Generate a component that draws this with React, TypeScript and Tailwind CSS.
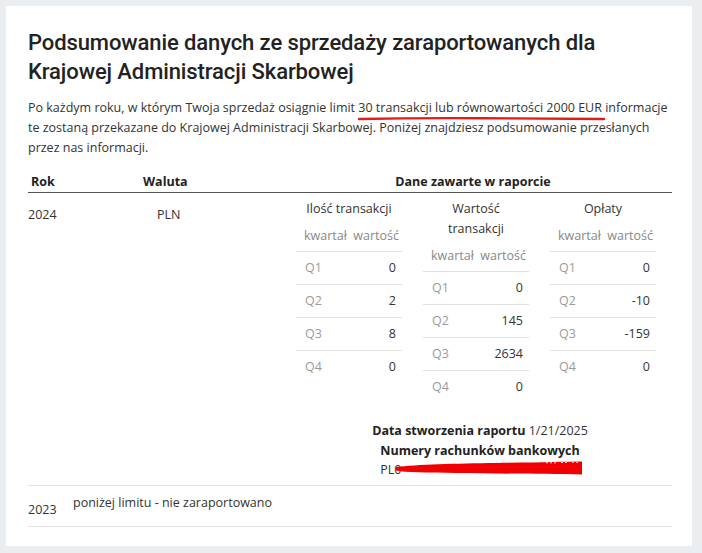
import React from "react";

type Row = [string, string];

function SubTable({ title, rows }: { title: React.ReactNode; rows: Row[] }) {
  return (
    <div className="w-[106px]">
      <div className="text-center leading-[20px] text-[#333]">{title}</div>
      <div className="flex justify-between pl-[8px] pr-[3px] pt-[7px] pb-[5px] leading-[20px] text-[#888]">
        <span>kwartał</span>
        <span>wartość</span>
      </div>
      {rows.map(([q, v]) => (
        <div
          key={q}
          className="flex justify-between border-t border-[#e2e2e2] pl-[9px] pr-[6px] py-[6px] leading-[20px]"
        >
          <span className="text-[#9a9a9a]">{q}</span>
          <span className="text-[#333]">{v}</span>
        </div>
      ))}
    </div>
  );
}

export default function App() {
  return (
    <div
      className="w-[702px] h-[553px] bg-[#ebeef1] pt-[6px] pl-[6px]"
      style={{ fontFamily: '"Open Sans", "Liberation Sans", sans-serif' }}
    >
      <div className="w-[686px] bg-white pt-[22px] pl-[22px] pr-[20px] pb-[19px] text-[12.5px] text-[#333]">
        <h1
          className="text-[22px] leading-[29px] font-medium text-[#222] tracking-[-0.1px]"
          style={{ fontFamily: 'Roboto, "Liberation Sans", sans-serif' }}
        >
          Podsumowanie danych ze sprzedaży zaraportowanych dla
          <br />
          Krajowej Administracji Skarbowej
        </h1>
        <p className="mt-[12px] leading-[20px]">
          Po każdym roku, w którym Twoja sprzedaż osiągnie limit{" "}
          <span className="relative">
            30 transakcji lub równowartości 2000 EUR
            <svg
              className="absolute left-0 top-[17px] pointer-events-none"
              width="248"
              height="6"
              viewBox="0 0 248 6"
            >
              <path
                d="M1 3 Q 60 1.8 124 2.2 T 246 3"
                stroke="#e31b1b"
                strokeWidth="2.4"
                fill="none"
                strokeLinecap="round"
              />
            </svg>
          </span>{" "}
          informacje te zostaną przekazane do Krajowej Administracji Skarbowej. Poniżej znajdziesz
          podsumowanie przesłanych przez nas informacji.
        </p>

        <div className="mt-[14px]">
          <div className="flex border-b border-[#555] font-bold text-[#222] leading-[20px]">
            <div className="w-[115px] pl-[3px]">Rok</div>
            <div className="w-[140px]">Waluta</div>
            <div className="flex-1 text-center pr-[9px]">Dane zawarte w raporcie</div>
          </div>

          <div className="flex border-b border-[#e2e2e2]">
            <div className="w-[115px] pt-[12px] leading-[20px]">2024</div>
            <div className="w-[140px] pt-[12px] pl-[14px] leading-[20px]">PLN</div>
            <div className="flex-1 pt-[6px] pb-[6px]">
              <div className="flex gap-[21px] pl-[13px] items-start">
                <SubTable
                  title="Ilość transakcji"
                  rows={[
                    ["Q1", "0"],
                    ["Q2", "2"],
                    ["Q3", "8"],
                    ["Q4", "0"],
                  ]}
                />
                <SubTable
                  title={
                    <>
                      Wartość
                      <br />
                      transakcji
                    </>
                  }
                  rows={[
                    ["Q1", "0"],
                    ["Q2", "145"],
                    ["Q3", "2634"],
                    ["Q4", "0"],
                  ]}
                />
                <SubTable
                  title="Opłaty"
                  rows={[
                    ["Q1", "0"],
                    ["Q2", "-10"],
                    ["Q3", "-159"],
                    ["Q4", "0"],
                  ]}
                />
              </div>
              <div className="mt-[18px] flex flex-col items-center pl-[5px] leading-[20px]">
                <div>
                  <span className="font-bold text-[#222]">Data stworzenia raportu</span> 1/21/2025
                </div>
                <div className="leading-[19px]">
                  <div className="font-bold text-[#222]">Numery rachunków bankowych</div>
                  <div className="relative">
                    PL0
                    <svg
                      className="absolute left-[16px] top-[1px]"
                      width="187"
                      height="15"
                      viewBox="0 0 187 15"
                    >
                      <path
                        d="M0 6 C 20 3.5, 60 2.5, 100 2 C 140 1.5, 170 0.5, 186 0.5 L 186 13.5 C 150 13, 100 12.5, 60 12 C 30 11.5, 10 11.5, 0 9.5 Z"
                        fill="#f00000"
                      />
                      <path d="M150 1.8 L 160 1.8 M165 1.5 L 172 1.5 M176 1.2 L 184 1.2" stroke="#fff" strokeWidth="0.8" strokeDasharray="2 2" />
                    </svg>
                  </div>
                </div>
              </div>
            </div>
          </div>

          <div className="flex border-b border-[#e2e2e2]">
            <div className="w-[45px] pt-[14px] pb-[6px] leading-[20px]">2023</div>
            <div className="pt-[7px] leading-[20px]">poniżej limitu - nie zaraportowano</div>
          </div>
        </div>
      </div>
    </div>
  );
}
